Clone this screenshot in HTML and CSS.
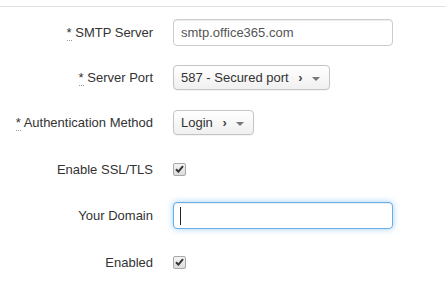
FILE: index.html
```html
<!DOCTYPE html>
<html>
<head>
<title>Mail Settings</title>
<link rel="stylesheet" href="styles.css">
</head>
<body>

<div class="topbar"></div>

<form class="settings">
  <div class="row">
    <label class="label"><abbr title="required">*</abbr> SMTP Server</label>
    <input type="text" class="field" value="smtp.office365.com">
  </div>

  <div class="row">
    <label class="label"><abbr title="required">*</abbr> Server Port</label>
    <div class="select">587 - Secured port <span class="chev">&rsaquo;</span><span class="caret"></span></div>
  </div>

  <div class="row">
    <label class="label"><abbr title="required">*</abbr> Authentication Method</label>
    <div class="select">Login <span class="chev">&rsaquo;</span><span class="caret"></span></div>
  </div>

  <div class="row row-check">
    <label class="label">Enable SSL/TLS</label>
    <span class="check"><svg width="9" height="8" viewBox="0 0 9 8"><path d="M1 4.2 L3.4 6.6 L8 1.2" fill="none" stroke="#333" stroke-width="2"/></svg></span>
  </div>

  <div class="row">
    <label class="label">Your Domain</label>
    <span class="focus-wrap"><input type="text" class="field focused" value=""></span>
  </div>

  <div class="row row-check">
    <label class="label">Enabled</label>
    <span class="check"><svg width="9" height="8" viewBox="0 0 9 8"><path d="M1 4.2 L3.4 6.6 L8 1.2" fill="none" stroke="#333" stroke-width="2"/></svg></span>
  </div>
</form>

</body>
</html>
```

FILE: styles.css
```css
/* Reset */
* {
  margin: 0;
  padding: 0;
  box-sizing: border-box;
}

body {
  font-family: 'Liberation Sans', Arial, sans-serif;
  font-size: 13px;
  color: #333;
  background-color: #fff;
}

/* Divider line along the top */
.topbar {
  height: 7px;
  border-bottom: 1px solid #e3e3e3;
}

/* Form layout */
.settings {
  display: flex;
  flex-direction: column;
  gap: 18px;
  padding-top: 12px;
}

.row {
  display: grid;
  grid-template-columns: 153px auto;
  column-gap: 20px;
  align-items: center;
  justify-items: start;
  height: 27px;
}

.row-check {
  height: 30px;
}

.label {
  justify-self: end;
  color: #333;
  white-space: nowrap;
}

.label abbr {
  text-decoration: none;
  border-bottom: 1px dotted #999;
}

/* Text inputs */
.field {
  width: 220px;
  height: 27px;
  padding: 0 7px;
  border: 1px solid #ccc;
  border-radius: 4px;
  font-family: inherit;
  font-size: 13px;
  color: #555;
  box-shadow: inset 0 1px 1px rgba(0, 0, 0, 0.075);
  outline: none;
}

.field.focused {
  border-color: #66afe9;
  box-shadow: inset 0 1px 1px rgba(0, 0, 0, 0.075), 0 0 6px rgba(102, 175, 233, 0.6);
}

/* Fake text caret in the focused field */
.focus-wrap {
  position: relative;
  display: block;
}

.focus-wrap::after {
  content: "";
  position: absolute;
  left: 7px;
  top: 5px;
  width: 1px;
  height: 18px;
  background-color: #222;
}

/* Select-like buttons */
.select {
  display: flex;
  align-items: center;
  height: 25px;
  padding: 0 9px 0 7px;
  border: 1px solid #c4c4c4;
  border-radius: 4px;
  background: linear-gradient(#fff, #f0f0f0);
  box-shadow: 0 1px 1px rgba(0, 0, 0, 0.05);
  color: #333;
  white-space: pre;
}

.chev {
  margin-left: 6px;
  font-weight: bold;
  font-size: 13px;
  color: #444;
}

.caret {
  margin-left: 9px;
  margin-top: 2px;
  width: 0;
  height: 0;
  border-left: 4px solid transparent;
  border-right: 4px solid transparent;
  border-top: 4px solid #777;
}

/* Checkboxes */
.check {
  display: flex;
  align-items: center;
  justify-content: center;
  width: 13px;
  height: 13px;
  border: 1px solid #a8a8a8;
  border-radius: 2px;
  background: linear-gradient(#f4f4f4, #dcdcdc);
}
```
